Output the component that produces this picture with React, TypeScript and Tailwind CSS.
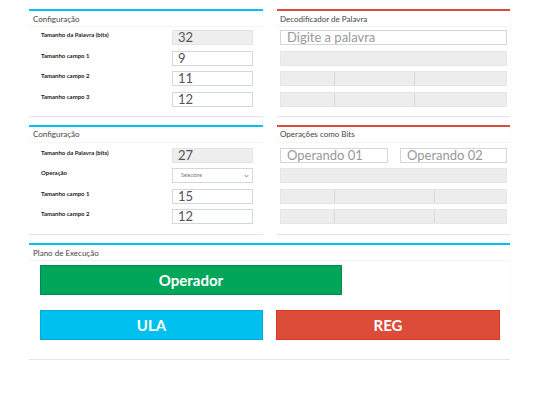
import React from "react";

const Box = ({
  color,
  title,
  titlePad = "pl-[4px]",
  children,
  className = "",
}: {
  color: string;
  title: string;
  titlePad?: string;
  children: React.ReactNode;
  className?: string;
}) => (
  <div
    className={`bg-white border-t-2 shadow-[0_1px_1px_rgba(0,0,0,0.1)] ${color} ${className}`}
  >
    <div
      className={`h-[16px] flex items-center border-b border-[#f4f4f4] text-[8px] text-[#444] ${titlePad}`}
    >
      {title}
    </div>
    {children}
  </div>
);

const Row = ({ label, children }: { label: string; children: React.ReactNode }) => (
  <div className="flex items-start h-[15px]">
    <div className="flex-1 text-[6px] font-bold leading-[9px] text-[#222]">{label}</div>
    <div className="w-[81px] h-[15px]">{children}</div>
  </div>
);

const Inp = ({ value, gray = false }: { value: string; gray?: boolean }) => (
  <div
    className={`w-full h-full border flex items-center pl-[5px] text-[13px] leading-none text-[#555] ${
      gray ? "bg-[#eeeeee] border-[#e4e4e4]" : "bg-white border-[#d2d6de]"
    }`}
  >
    {value}
  </div>
);

const Bar = ({ cells }: { cells?: number[] }) => (
  <div className="h-[15px] flex bg-[#ededed] border border-[#e6e6e6]">
    {cells
      ? cells.map((w, i) => (
          <div
            key={i}
            className={`h-full ${i > 0 ? "border-l border-[#d8d8d8]" : ""}`}
            style={{ width: w }}
          />
        ))
      : null}
  </div>
);

export default function App() {
  return (
    <div className="w-[540px] h-[405px] bg-white font-['Lato','Noto_Sans',sans-serif] pl-[29px] pr-[30px] pt-[9px]">
      <div className="grid grid-cols-[234px_233px] gap-x-[14px] gap-y-[9px]">
        <Box color="border-[#00c0ef]" title="Configuração">
          <div className="flex flex-col gap-[5.5px] pl-[12px] pr-[10px] pt-[3px] pb-[9px]">
            <Row label="Tamanho da Palavra (bits)">
              <Inp value="32" gray />
            </Row>
            <Row label="Tamanho campo 1">
              <Inp value="9" />
            </Row>
            <Row label="Tamanho campo 2">
              <Inp value="11" />
            </Row>
            <Row label="Tamanho campo 3">
              <Inp value="12" />
            </Row>
          </div>
        </Box>
        <Box color="border-[#dd4b39]" title="Decodificador de Palavra" titlePad="pl-[3px]">
          <div className="flex flex-col gap-[5.5px] pl-[3px] pr-[3px] pt-[3px] pb-[9px]">
            <div className="h-[15px] border border-[#d2d6de] flex items-center pl-[6px] text-[13px] leading-none text-[#999]">
              Digite a palavra
            </div>
            <Bar />
            <Bar cells={[53, 80, 92]} />
            <Bar cells={[53, 80, 92]} />
          </div>
        </Box>
        <Box color="border-[#00c0ef]" title="Configuração">
          <div className="flex flex-col gap-[5.5px] pl-[12px] pr-[10px] pt-[5px] pb-[10px]">
            <Row label="Tamanho da Palavra (bits)">
              <Inp value="27" gray />
            </Row>
            <Row label="Operação">
              <div className="w-full h-full border border-[#d2d6de] flex items-center justify-between pl-[8px] pr-[3px] text-[5px] text-[#777]">
                <span>Selecione</span>
                <svg width="5" height="4" viewBox="0 0 6 4">
                  <path d="M1 1l2 2 2-2" fill="none" stroke="#666" strokeWidth="1" />
                </svg>
              </div>
            </Row>
            <Row label="Tamanho campo 1">
              <Inp value="15" />
            </Row>
            <Row label="Tamanho campo 2">
              <Inp value="12" />
            </Row>
          </div>
        </Box>
        <Box color="border-[#dd4b39]" title="Operações como Bits" titlePad="pl-[3px]">
          <div className="flex flex-col gap-[5.5px] pl-[3px] pr-[3px] pt-[5px] pb-[10px]">
            <div className="h-[15px] flex gap-[12px]">
              <div className="w-[108px] h-full border border-[#d2d6de] flex items-center pl-[6px] text-[13px] leading-none text-[#999]">
                Operando 01
              </div>
              <div className="flex-1 h-full border border-[#d2d6de] flex items-center pl-[6px] text-[13px] leading-none text-[#999]">
                Operando 02
              </div>
            </div>
            <Bar />
            <Bar cells={[53, 100, 72]} />
            <Bar cells={[53, 100, 72]} />
          </div>
        </Box>
      </div>
      <Box color="border-[#00c0ef]" title="Plano de Execução" className="mt-[9px]">
        <div className="flex flex-col gap-[15px] pl-[11px] pr-[10px] pt-[4px] pb-[19px]">
          <div className="w-[302px] h-[30px] bg-[#00a65a] border border-[#008d4c] flex items-center justify-center text-white font-bold text-[15px]">
            Operador
          </div>
          <div className="flex gap-[13px]">
            <div className="w-[223px] h-[30px] bg-[#00c0ef] border border-[#00acd6] flex items-center justify-center text-white font-bold text-[15px]">
              ULA
            </div>
            <div className="w-[224px] h-[30px] bg-[#dd4b39] border border-[#d73925] flex items-center justify-center text-white font-bold text-[15px]">
              REG
            </div>
          </div>
        </div>
      </Box>
    </div>
  );
}
